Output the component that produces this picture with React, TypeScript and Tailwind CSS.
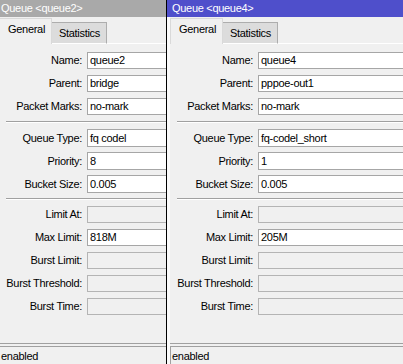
import React from "react";

type Row = { label: string; value?: string; disabled?: boolean };

function Field({ row, tall }: { row: Row; tall?: boolean }) {
  return (
    <div className={tall ? "flex items-center h-[18px]" : "flex items-center h-[17px]"}>
      <div className="w-[76px] shrink-0 flex justify-end text-black whitespace-nowrap leading-none">
        <span>{row.label}</span>
      </div>
      <div
        className={
          row.disabled
            ? "ml-[5px] flex-1 h-full border border-[#b4b4b4] bg-[#f0f0f0]"
            : "ml-[5px] flex-1 h-full border border-[#a6a6a6] bg-white pl-[2px] flex items-center text-black leading-none whitespace-nowrap"
        }
      >
        {row.value}
      </div>
    </div>
  );
}

function Sep() {
  return (
    <div className="flex flex-col">
      <div className="h-px bg-[#a0a0a0]" />
      <div className="h-px bg-white" />
    </div>
  );
}

function Win({
  title,
  active,
  g1,
  g2,
  g3,
}: {
  title: string;
  active: boolean;
  g1: Row[];
  g2: Row[];
  g3: Row[];
}) {
  return (
    <div className="w-[330px] h-[364px] flex flex-col bg-[#f0f0f0] border-l border-black overflow-hidden text-[11px] tracking-[-0.3px] font-['Liberation_Sans',Arial,sans-serif]">
      <div
        className={
          active
            ? "h-[17px] shrink-0 bg-[#4f4fcb] text-white pl-[5px] leading-[17px] whitespace-nowrap"
            : "h-[17px] shrink-0 bg-[#a9a9a9] text-white pl-[5px] leading-[17px] whitespace-nowrap"
        }
      >
        {title}
      </div>
      <div className="flex-1 flex min-h-0">
        <div className="w-[3px] shrink-0 bg-[#fafafa]" />
        <div className="flex-1 flex flex-col min-w-0">
          {/* tabs */}
          <div className="h-[27px] shrink-0 flex items-end">
            <div className="w-[53px] h-[26px] border-l border-t border-r border-[#d9d9d9] bg-[#f0f0f0] pl-[8px] pt-[5px] text-black leading-none">
              General
            </div>
            <div className="w-[55px] h-[22px] border-t border-r border-b border-[#adadad] border-b-white bg-[#dcdcdc] pl-[7px] pt-[5px] text-black leading-none">
              Statistics
            </div>
            <div className="flex-1 h-px bg-white" />
          </div>
          {/* panel */}
          <div className="h-[300px] shrink-0 border-b border-[#a0a0a0] pl-[7px] pt-[8px] flex flex-col">
            <div className="flex flex-col gap-[6px]">
              {g1.map((r) => (
                <Field key={r.label} row={r} />
              ))}
            </div>
            <div className="mt-[6px]">
              <Sep />
            </div>
            <div className="mt-[6px] flex flex-col gap-[5px]">
              {g2.map((r) => (
                <Field key={r.label} row={r} tall />
              ))}
            </div>
            <div className="mt-[5px]">
              <Sep />
            </div>
            <div className="mt-[6px] flex flex-col gap-[6px]">
              {g3.map((r) => (
                <Field key={r.label} row={r} />
              ))}
            </div>
          </div>
          <div className="h-[2px] shrink-0" />
          <div className="h-[20px] shrink-0 border-l border-t border-[#a0a0a0] pl-[1px] pt-[4px] leading-none text-black">
            enabled
          </div>
        </div>
      </div>
    </div>
  );
}

export default function App() {
  const g3a: Row[] = [
    { label: "Limit At:", disabled: true },
    { label: "Max Limit:", value: "818M" },
    { label: "Burst Limit:", disabled: true },
    { label: "Burst Threshold:", disabled: true },
    { label: "Burst Time:", disabled: true },
  ];
  const g3b: Row[] = [
    { label: "Limit At:", disabled: true },
    { label: "Max Limit:", value: "205M" },
    { label: "Burst Limit:", disabled: true },
    { label: "Burst Threshold:", disabled: true },
    { label: "Burst Time:", disabled: true },
  ];
  return (
    <div className="w-[403px] h-[364px] flex overflow-hidden bg-[#f0f0f0]">
      <div className="w-[166px] shrink-0 overflow-hidden">
        <div className="-ml-[5px]">
          <Win
            title="Queue <queue2>"
            active={false}
            g1={[
              { label: "Name:", value: "queue2" },
              { label: "Parent:", value: "bridge" },
              { label: "Packet Marks:", value: "no-mark" },
            ]}
            g2={[
              { label: "Queue Type:", value: "fq codel" },
              { label: "Priority:", value: "8" },
              { label: "Bucket Size:", value: "0.005" },
            ]}
            g3={g3a}
          />
        </div>
      </div>
      <div className="flex-1 overflow-hidden">
        <Win
          title="Queue <queue4>"
          active={true}
          g1={[
            { label: "Name:", value: "queue4" },
            { label: "Parent:", value: "pppoe-out1" },
            { label: "Packet Marks:", value: "no-mark" },
          ]}
          g2={[
            { label: "Queue Type:", value: "fq-codel_short" },
            { label: "Priority:", value: "1" },
            { label: "Bucket Size:", value: "0.005" },
          ]}
          g3={g3b}
        />
      </div>
    </div>
  );
}
